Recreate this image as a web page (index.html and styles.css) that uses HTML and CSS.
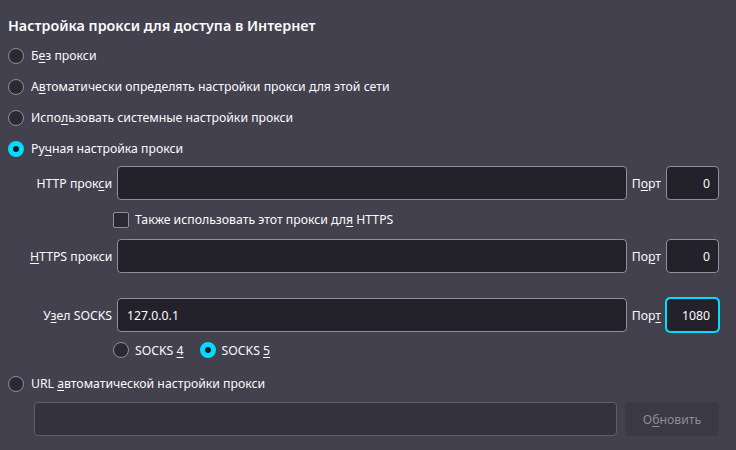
FILE: index.html
```html
<!DOCTYPE html>
<html lang="ru">
<head>
<meta charset="utf-8">
<title>Параметры соединения</title>
<link rel="stylesheet" href="styles.css">
</head>
<body>
<div class="page">
  <h1 class="title">Настройка прокси для доступа в Интернет</h1>

  <label class="radio-row"><span class="radio"></span><span>Б<u>е</u>з прокси</span></label>
  <label class="radio-row"><span class="radio"></span><span>А<u>в</u>томатически определять настройки прокси для этой сети</span></label>
  <label class="radio-row"><span class="radio"></span><span>Испо<u>л</u>ьзовать системные настройки прокси</span></label>
  <label class="radio-row"><span class="radio checked"></span><span>Ру<u>ч</u>ная настройка прокси</span></label>

  <div class="manual">
    <div class="field-row first">
      <span class="field-label">HTTP прок<u>с</u>и</span>
      <div class="input"></div>
      <span class="port-label">П<u>о</u>рт</span>
      <div class="input port">0</div>
    </div>
    <div class="check-row">
      <span class="checkbox"></span>
      <span>Также использовать этот прокси дл<u>я</u> HTTPS</span>
    </div>
    <div class="field-row">
      <span class="field-label"><u>H</u>TTPS прокси</span>
      <div class="input"></div>
      <span class="port-label">По<u>р</u>т</span>
      <div class="input port">0</div>
    </div>
    <div class="field-row socks">
      <span class="field-label">У<u>з</u>ел SOCKS</span>
      <div class="input">127.0.0.1</div>
      <span class="port-label">Пор<u>т</u></span>
      <div class="input port focused">1080</div>
    </div>
    <div class="socks-row">
      <label class="socks-opt"><span class="radio"></span><span>SOCKS <u>4</u></span></label>
      <label class="socks-opt"><span class="radio checked"></span><span>SOCKS <u>5</u></span></label>
    </div>
  </div>

  <label class="radio-row"><span class="radio"></span><span>URL <u>а</u>втоматической настройки прокси</span></label>
  <div class="url-row">
    <div class="input disabled"></div>
    <div class="button disabled">О<u>б</u>новить</div>
  </div>
</div>
</body>
</html>
```
FILE: styles.css
```css
html, body {
  margin: 0;
  background: #42414d;
}
body {
  color: #fbfbfe;
  font-family: "Noto Sans", "Open Sans", sans-serif;
  font-size: 12.25px;
}
u {
  text-decoration: underline;
  text-underline-offset: 2px;
}
.page {
  padding: 16px 17px 0 8px;
}
.title {
  margin: 0 0 4px 0;
  font-size: 14.3px;
  font-weight: 600;
  line-height: 20px;
}
.radio-row {
  display: flex;
  align-items: center;
  gap: 7px;
  height: 31px;
}
.radio {
  box-sizing: border-box;
  width: 16px;
  height: 16px;
  border-radius: 50%;
  border: 1px solid #8f8f9d;
  background: #2b2a33;
  flex: none;
}
.radio.checked {
  border: 5px solid #00ddff;
  background: #1c1b22;
}
.manual {
  margin-left: 22px;
  padding-top: 2px;
}
.field-row {
  display: flex;
  align-items: center;
  gap: 5px;
}
.field-row.socks {
  margin-top: 25px;
}
.field-label {
  width: 82px;
  text-align: right;
  white-space: nowrap;
  flex: none;
}
.input {
  box-sizing: border-box;
  height: 34px;
  flex: 1;
  background: #23222b;
  border: 1px solid #8f8f9d;
  border-radius: 4px;
  display: flex;
  align-items: center;
  padding: 0 9px;
}
.input.port {
  flex: none;
  width: 53px;
  justify-content: flex-end;
  padding: 0 8px;
}
.input.focused {
  outline: 2px solid #00ddff;
  outline-offset: -1px;
}
.port-label {
  white-space: nowrap;
}
.check-row {
  display: flex;
  align-items: center;
  gap: 6px;
  height: 39px;
  padding-left: 83px;
}
.checkbox {
  box-sizing: border-box;
  width: 16px;
  height: 16px;
  border: 1px solid #8f8f9d;
  border-radius: 2px;
  background: #2b2a33;
}
.socks-row {
  display: flex;
  align-items: center;
  height: 36px;
  padding-left: 83px;
  gap: 16px;
}
.socks-opt {
  display: flex;
  align-items: center;
  gap: 6px;
}
.url-row {
  display: flex;
  gap: 8px;
  margin: 3px 0 0 26px;
}
.input.disabled {
  background: #34333d;
  border-color: #5f5e69;
}
.button {
  box-sizing: border-box;
  width: 94px;
  height: 34px;
  border-radius: 4px;
  background: #3a3944;
  color: #8e8d95;
  display: flex;
  align-items: center;
  justify-content: center;
}
```
